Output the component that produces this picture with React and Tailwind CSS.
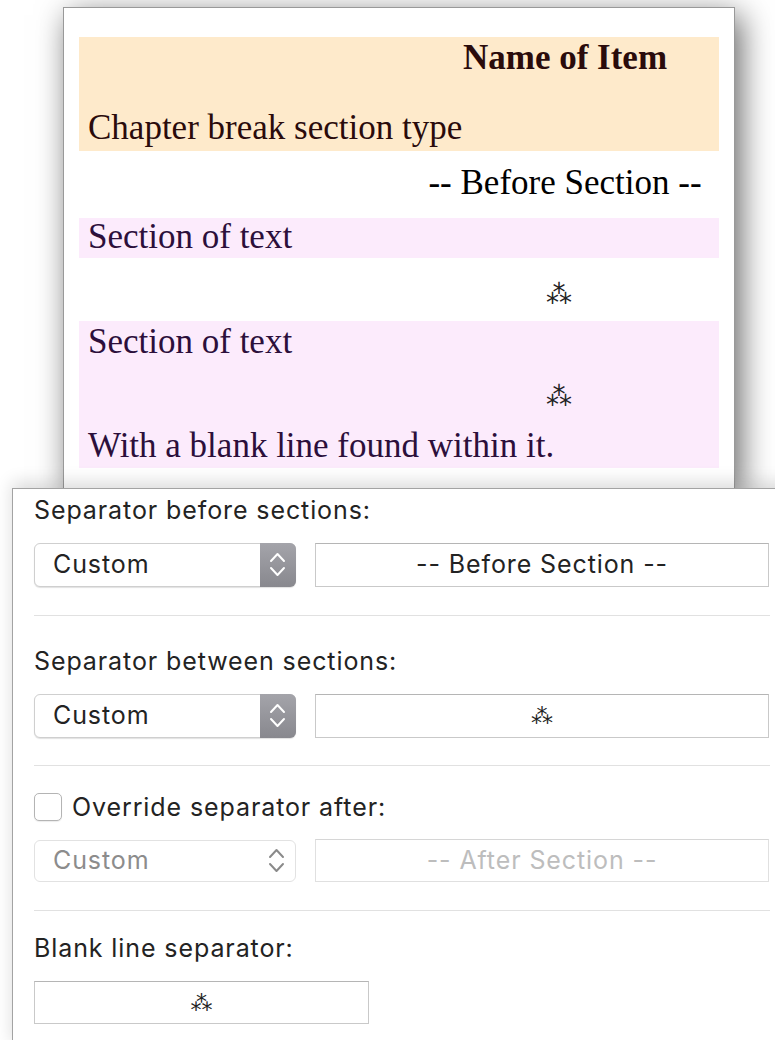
import React from "react";

const serif = { fontFamily: '"Liberation Serif", "Times New Roman", serif' };
const sans = { fontFamily: 'Inter, "Liberation Sans", Arial, sans-serif', letterSpacing: "0.9px" };
const glyph = { fontFamily: '"DejaVu Sans", "Noto Sans", sans-serif', letterSpacing: 0 };

function Chevrons({ color }) {
  return (
    <svg width="35" height="42" viewBox="0 0 35 42" fill="none">
      <polyline points="10,17 16.5,10 23,17" stroke={color} strokeWidth="2" strokeLinecap="round" strokeLinejoin="round" />
      <polyline points="10,24 16.5,31 23,24" stroke={color} strokeWidth="2" strokeLinecap="round" strokeLinejoin="round" />
    </svg>
  );
}

function PopUp({ disabled }) {
  if (disabled) {
    return (
      <div className="flex h-[42px] w-[262px] shrink-0 rounded-[6px] border border-[#e2e2e2] bg-white">
        <div className="flex flex-1 items-center pl-[18px] text-[25px] text-[#8c8c8c]">Custom</div>
        <div className="flex w-[35px] items-center justify-center">
          <Chevrons color="#8a8a8a" />
        </div>
      </div>
    );
  }
  return (
    <div className="flex h-[44px] w-[262px] shrink-0 rounded-[6px] border border-[#cfcfcf] bg-white shadow-[0_1px_1px_rgba(0,0,0,0.12)]">
      <div className="flex flex-1 items-center pl-[18px] text-[25px] text-[#232323]">Custom</div>
      <div className="-my-px -mr-px flex w-[36px] items-center justify-center rounded-r-[6px] bg-gradient-to-b from-[#a4a4aa] to-[#88888e]">
        <Chevrons color="#ffffff" />
      </div>
    </div>
  );
}

function Field({ children, width = "w-[454px]", muted, height = "h-[44px]" }) {
  return (
    <div
      className={`flex ${height} ${width} items-center justify-center border bg-white text-[25px] ${
        muted ? "border-[#e0e0e0] border-t-[#d6d6d6] text-[#bdbdbd]" : "border-[#c9c9c9] border-t-[#b5b5b5] text-[#232323]"
      }`}
    >
      {children}
    </div>
  );
}

function Asterism({ size = "text-[22px]" }) {
  return (
    <span className={`${size} leading-none text-[#222]`} style={glyph}>
      ⁂
    </span>
  );
}

export default function App() {
  return (
    <div className="relative h-[1040px] w-[775px] overflow-hidden bg-white">
      {/* Compile preview page */}
      <div
        className="ml-[63px] mt-[7px] h-[481px] w-[672px] border border-b-0 border-[#999999] bg-white px-[15px] pt-[29px] shadow-[6px_8px_30px_rgba(0,0,0,0.6)]"
        style={serif}
      >
        <div className="flex h-[114px] flex-col justify-between bg-[#feeacb] pb-[4px] text-[35px] leading-[38px] text-[#2a0b0b]">
          <div className="pl-[332px] pt-[2px] text-center font-bold">Name of Item</div>
          <div className="pl-[9px]">Chapter break section type</div>
        </div>
        <div className="mb-[16px] mt-[13px] pl-[332px] text-center text-[35px] leading-[38px] text-black">
          -- Before Section --
        </div>
        <div className="h-[40px] bg-[#fcebfc] pl-[9px] text-[35px] leading-[38px] text-[#2c0f3b]">
          Section of text
        </div>
        <div className="flex h-[63px] items-center justify-center pl-[320px] pt-[8px]">
          <Asterism size="text-[26px]" />
        </div>
        <div className="h-[147px] bg-[#fcebfc] pl-[9px] pt-[2px] text-[35px] leading-[38px] text-[#2c0f3b]">
          <div>Section of text</div>
          <div className="flex h-[66px] items-center justify-center pl-[311px] pt-[4px]">
            <Asterism size="text-[26px]" />
          </div>
          <div>With a blank line found within it.</div>
        </div>
      </div>

      {/* Separator settings panel */}
      <div
        className="relative z-10 ml-[12px] h-[560px] w-[800px] border-l border-t border-[#a3a3a3] bg-white pl-[21px] pt-[6px] text-[#232323] shadow-[0_-6px_16px_rgba(0,0,0,0.14)]"
        style={sans}
      >
        <div className="w-[736px]">
          <div className="h-[30px] text-[25px] leading-[30px]">Separator before sections:</div>
          <div className="mt-[18px] flex items-center gap-[19px]">
            <PopUp />
            <Field>-- Before Section --</Field>
          </div>
          <div className="mt-[28px] h-px bg-[#e1e1e1]" />

          <div className="mt-[30px] h-[30px] text-[25px] leading-[30px]">Separator between sections:</div>
          <div className="mt-[18px] flex items-center gap-[19px]">
            <PopUp />
            <Field>
              <Asterism />
            </Field>
          </div>
          <div className="mt-[27px] h-px bg-[#e1e1e1]" />

          <div className="mt-[26px] flex h-[30px] items-center gap-[10px]">
            <div className="h-[28px] w-[28px] rounded-[5px] border border-[#b4b4b4] bg-white shadow-[0_1px_1px_rgba(0,0,0,0.08)]" />
            <div className="text-[25px] leading-[30px]">Override separator after:</div>
          </div>
          <div className="mt-[17px] flex items-center gap-[19px]">
            <PopUp disabled />
            <Field muted height="h-[43px]">-- After Section --</Field>
          </div>
          <div className="mt-[28px] h-px bg-[#e1e1e1]" />

          <div className="mt-[22px] h-[30px] text-[25px] leading-[30px]">Blank line separator:</div>
          <div className="mt-[18px]">
            <Field width="w-[335px]" height="h-[43px]">
              <Asterism />
            </Field>
          </div>
        </div>
      </div>
    </div>
  );
}
